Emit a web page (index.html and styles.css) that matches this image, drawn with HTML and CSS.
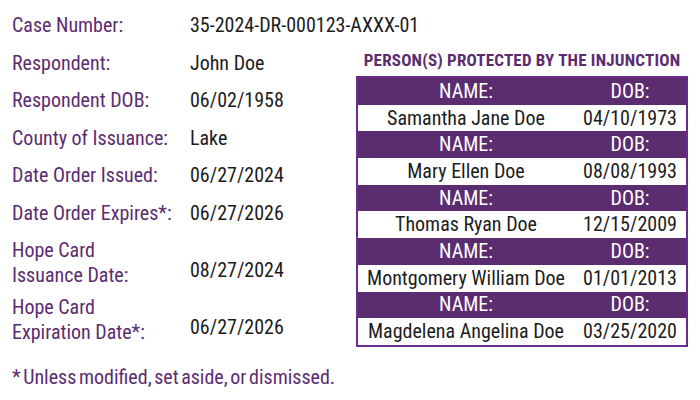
FILE: index.html
```html
<!DOCTYPE html>
<html lang="en">
<head>
<meta charset="utf-8">
<title>Hope Card</title>
<link rel="stylesheet" href="styles.css">
</head>
<body>
<div class="page">
  <div class="case-row">
    <div class="label">Case Number:</div>
    <div class="value">35-2024-DR-000123-AXXX-01</div>
  </div>
  <div class="main">
    <div class="details">
      <div class="label">Respondent:</div><div class="value">John Doe</div>
      <div class="label">Respondent DOB:</div><div class="value">06/02/1958</div>
      <div class="label">County of Issuance:</div><div class="value">Lake</div>
      <div class="label">Date Order Issued:</div><div class="value">06/27/2024</div>
      <div class="label">Date Order Expires*:</div><div class="value">06/27/2026</div>
      <div class="label">Hope Card<br>Issuance Date:</div><div class="value two">08/27/2024</div>
      <div class="label">Hope Card<br>Expiration Date*:</div><div class="value two">06/27/2026</div>
    </div>
    <section class="protected">
      <h2 class="title">PERSON(S) PROTECTED BY THE INJUNCTION</h2>
      <table class="people">
        <tr class="head"><td class="name">NAME:</td><td class="dob">DOB:</td></tr>
        <tr class="body"><td class="name">Samantha Jane Doe</td><td class="dob">04/10/1973</td></tr>
        <tr class="head"><td class="name">NAME:</td><td class="dob">DOB:</td></tr>
        <tr class="body"><td class="name">Mary Ellen Doe</td><td class="dob">08/08/1993</td></tr>
        <tr class="head"><td class="name">NAME:</td><td class="dob">DOB:</td></tr>
        <tr class="body"><td class="name">Thomas Ryan Doe</td><td class="dob">12/15/2009</td></tr>
        <tr class="head"><td class="name">NAME:</td><td class="dob">DOB:</td></tr>
        <tr class="body"><td class="name">Montgomery William Doe</td><td class="dob">01/01/2013</td></tr>
        <tr class="head"><td class="name">NAME:</td><td class="dob">DOB:</td></tr>
        <tr class="body"><td class="name">Magdelena Angelina Doe</td><td class="dob">03/25/2020</td></tr>
      </table>
    </section>
  </div>
  <p class="note">* Unless modified, set aside, or dismissed.</p>
</div>
</body>
</html>
```
FILE: styles.css
```css
html, body {
  margin: 0;
  padding: 0;
  background: #ffffff;
}
body {
  width: 700px;
  height: 400px;
  overflow: hidden;
  font-family: "Roboto Condensed", "DejaVu Sans Condensed", sans-serif;
  font-size: 20px;
  line-height: 25px;
}
.page {
  padding: 13px 0 0 12px;
}
.label {
  color: #5b2c6f;
  white-space: nowrap;
}
.value {
  color: #1c1c1c;
  white-space: nowrap;
}
.case-row {
  display: flex;
  height: 37.5px;
}
.case-row .label {
  width: 178px;
}
.main {
  display: flex;
}
.details {
  display: grid;
  grid-template-columns: 178px 166px;
  grid-template-rows: repeat(5, 37.5px) 57px 57px;
  width: 344px;
}
.value.two {
  padding-top: 20px;
}
.protected {
  width: 332px;
}
.title {
  margin: 0 0 7.5px 0;
  font-size: 17px;
  line-height: 18px;
  font-weight: bold;
  color: #5b2c6f;
  text-align: center;
  white-space: nowrap;
  letter-spacing: 0.2px;
}
.people {
  width: 332px;
  border-collapse: collapse;
  border: 2px solid #6a2d8e;
}
.people td {
  height: 26.7px;
  padding: 0;
  text-align: center;
  line-height: 25px;
  white-space: nowrap;
}
.people .name {
  width: 216px;
}
.head td {
  background: #5b2c6f;
  color: #ffffff;
}
.body td {
  background: #ffffff;
  color: #1c1c1c;
}
.note {
  margin: 13px 0 0 0;
  color: #5b2c6f;
  word-spacing: -2px;
}
```
